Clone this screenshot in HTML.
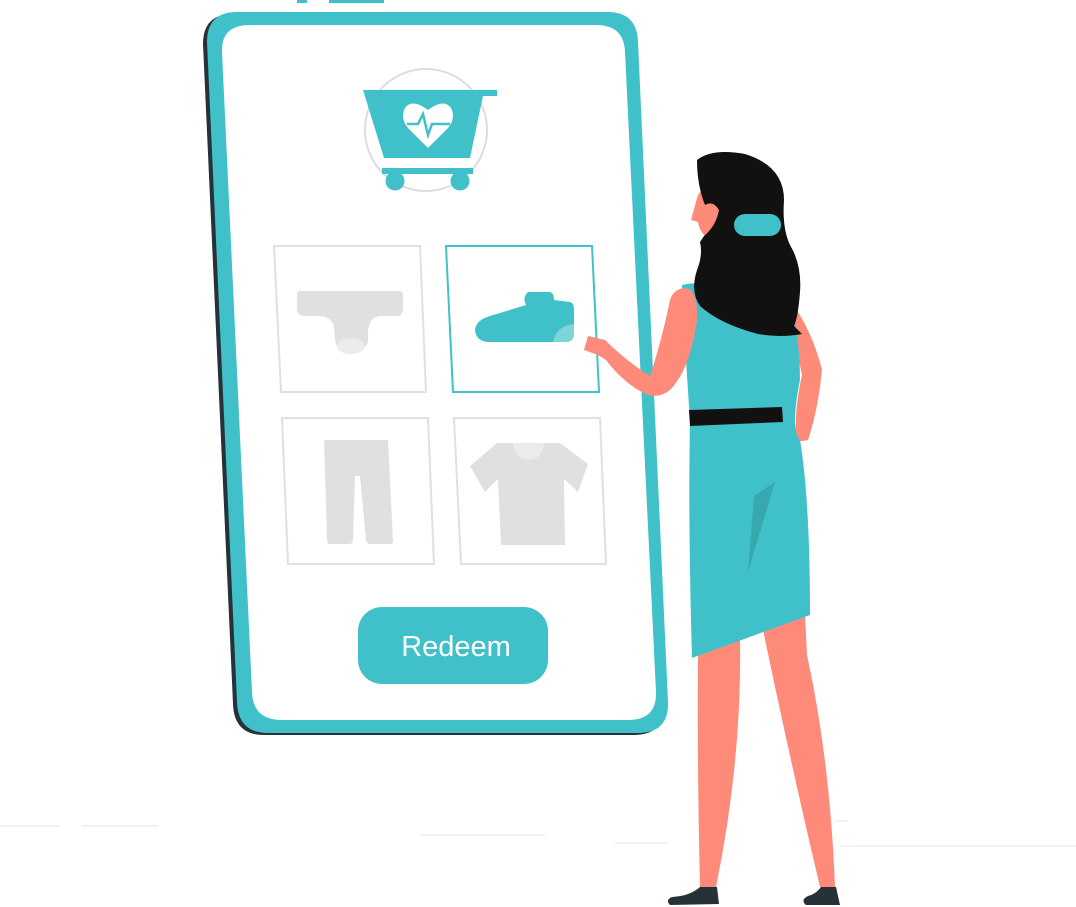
<!DOCTYPE html>
<html><head><meta charset="utf-8"><style>
html,body{margin:0;padding:0;background:#fff;width:1076px;height:907px;overflow:hidden}
svg{display:block}
</style></head><body>
<svg width="1076" height="907" viewBox="0 0 1076 907" xmlns="http://www.w3.org/2000/svg">
<g stroke="#eee" stroke-width="1.5">
<line x1="0" y1="826" x2="60" y2="826"/><line x1="82" y1="826" x2="158" y2="826"/>
<line x1="420" y1="835" x2="545" y2="835"/><line x1="615" y1="843" x2="668" y2="843"/>
<line x1="840" y1="846" x2="1076" y2="846"/><line x1="834" y1="821" x2="848" y2="821"/>
</g>
<rect x="297" y="0" width="10" height="3" fill="#40c1c9"/><rect x="329" y="0" width="55" height="3" fill="#40c1c9"/>
<path d="M233,14 L604,14 Q633,14 634,44 L664,704 Q665,735 634,735 L264,735 Q234,735 233,704 L203,44 Q203,14 233,14 Z" fill="#263238"/>
<path d="M237,12 L608,12 Q637,12 638,42 L668,702 Q669,733 638,733 L268,733 Q238,733 237,702 L207,42 Q207,12 237,12 Z" fill="#40c1c9"/>
<path d="M250,25 L596,25 Q624,25 625,52 L656,692 Q657,720 628,720 L282,720 Q253,720 252,692 L222,52 Q221,25 250,25 Z" fill="#fff"/>
<circle cx="426" cy="130" r="61" fill="none" stroke="#ddd" stroke-width="2"/>
<polygon points="363,90 497,90 497,96 483,96 470,158 384,158" fill="#40c1c9"/>
<rect x="382" y="168" width="91" height="6" fill="#40c1c9"/>
<circle cx="395" cy="181" r="9.5" fill="#40c1c9"/><circle cx="460" cy="181" r="9.5" fill="#40c1c9"/>
<path d="M428,148 L408,128 Q400,118 405,108 Q412,98 428,110 Q444,98 451,108 Q456,118 448,128 Z" fill="#fff"/>
<polyline points="407,124 418,124 423,114 428,135 432,124 450,124" fill="none" stroke="#40c1c9" stroke-width="2.5"/>
<g fill="none" stroke-width="2">
<polygon points="274,246 420,246 426,392 281,392" stroke="#e0e0e0"/>
<polygon points="446,246 592,246 599,392 453,392" stroke="#40c1c9"/>
<polygon points="282,418 428,418 434,564 288,564" stroke="#e0e0e0"/>
<polygon points="454,418 600,418 606,564 461,564" stroke="#e0e0e0"/>
</g>
<path d="M300,291 L399,291 Q403,291 403,296 L403,309 Q403,316 396,316 L380,316 Q370,317 368,330 L368,342 Q364,352 352,352 L348,352 Q337,352 335,340 L334,328 Q332,316 318,316 L305,316 Q298,316 297,309 L297,296 Q297,291 300,291 Z" fill="#e0e0e0"/>
<ellipse cx="351" cy="346" rx="14" ry="8" fill="#ebebeb"/>
<path d="M528,292 L550,292 Q554,293 554,300 L570,302 Q574,303 574,310 L574,335 Q573,342 565,342 L488,342 Q476,341 475,330 Q476,320 490,316 L526,305 Q522,298 528,292 Z" fill="#40c1c9"/>
<path d="M553,342 Q556,326 574,324 L574,336 Q572,342 566,342 Z" fill="#7dd4d9"/>
<path d="M324,440 L388,440 L393,541 Q393,544 390,544 L370,544 Q367,544 366,540 L360,476 L355,476 L353,540 Q353,544 349,544 L330,544 Q327,544 327,540 Z" fill="#e0e0e0"/>
<path d="M497,443 L560,443 L588,464 L578,492 L564,479 L565,545 L501,545 L498,479 L485,492 L470,466 Z" fill="#e0e0e0"/>
<path d="M513,443 L544,443 Q542,460 529,460 Q515,460 513,443 Z" fill="#ebebeb"/>
<rect x="358" y="607" width="190" height="77" rx="24" fill="#40c1c9"/>
<text x="456" y="656" text-anchor="middle" font-family="Liberation Sans, sans-serif" font-size="29" fill="#fff">Redeem</text>
<path d="M698,650 L740,640 Q742,760 716,887 L700,887 Q697,760 698,650 Z" fill="#fe8a7a"/>
<path d="M762,625 L805,615 L807,655 Q830,760 835,887 L820,887 Q790,760 762,625 Z" fill="#fe8a7a"/>
<path d="M700,887 L717,887 L719,904 L670,905 Q665,900 672,897 Q690,896 700,887 Z" fill="#263238"/>
<path d="M821,887 L836,887 L840,905 L806,905 Q800,900 808,896 Q816,894 821,887 Z" fill="#263238"/>
<path d="M790,300 Q812,330 822,370 Q818,410 808,440 L796,442 Q794,410 802,375 Q795,340 780,320 Z" fill="#fe8a7a"/>
<path d="M682,285 Q700,280 720,290 L790,300 Q800,340 800,380 Q790,430 800,440 Q810,500 810,615 L692,658 Q688,520 690,420 Q685,350 682,285 Z" fill="#40c1c9"/>
<polygon points="754,496 775,482 748,572" fill="#38a8af"/>
<polygon points="689,410 782,407 783,422 690,426" fill="#111"/>
<path d="M686,288 Q698,290 697,320 Q690,370 670,390 Q660,398 648,395 Q625,385 606,360 L598,355 L584,350 L588,336 L605,340 Q625,360 650,376 Q662,340 670,300 Q674,288 686,288 Z" fill="#fe8a7a"/>
<path d="M697,198 Q700,188 710,190 L722,205 Q722,225 712,240 Q700,235 698,222 L691,220 Z" fill="#fe8a7a"/>
<path d="M697,160 Q712,148 745,154 Q784,166 784,200 Q782,228 790,245 Q802,265 800,292 Q798,318 794,326 L802,334 Q780,338 758,334 Q720,324 700,306 Q690,292 697,270 Q703,255 700,242 L704,236 Q716,226 719,210 Q713,200 705,205 Q697,185 697,160 Z" fill="#111"/>
<rect x="734" y="214" width="47" height="22" rx="11" fill="#40c1c9"/>
</svg>
</body></html>
